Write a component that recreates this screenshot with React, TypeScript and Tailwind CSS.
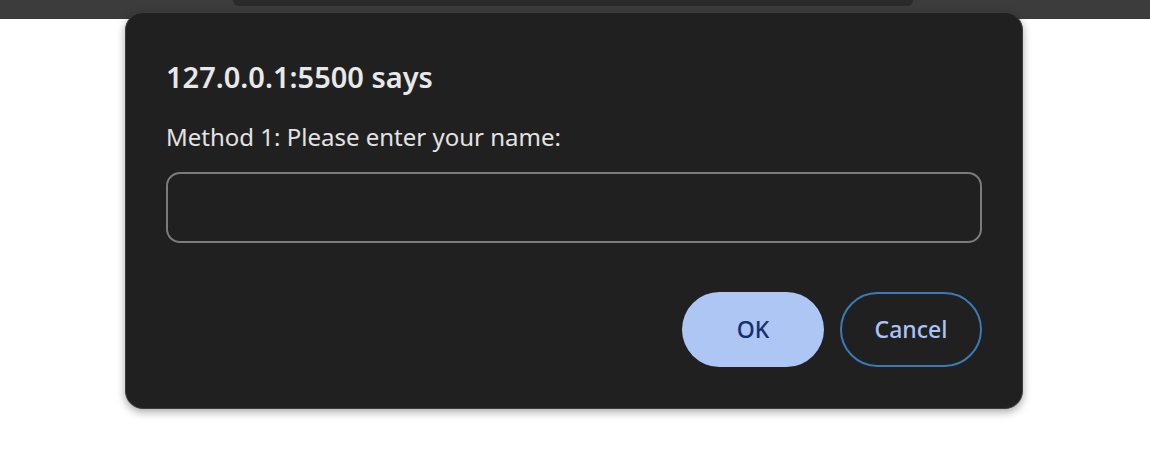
export default function App() {
  return (
    <div className="relative w-[1150px] h-[450px] bg-white overflow-hidden font-['Noto_Sans',sans-serif]">
      {/* browser chrome strip */}
      <div className="h-[19px] bg-[#3c3c3c] flex justify-center">
        <div className="ml-[-4px] w-[680px] h-[6px] bg-[#2a2a2a] rounded-b-[14px]"></div>
      </div>

      {/* prompt dialog */}
      <div className="absolute left-[125px] top-[12px] w-[898px] h-[397px] bg-[#202020] rounded-[18px] border border-[#3d3d3d] shadow-[0_3px_8px_rgba(0,0,0,0.35)] px-[40px] pt-[46px]">
        <h1 className="text-[29px] leading-[36px] font-semibold text-[#e8e8e8]">127.0.0.1:5500 says</h1>
        <p className="mt-[26px] text-[24px] leading-[32px] text-[#e3e3e3]">Method 1: Please enter your name:</p>
        <input
          className="mt-[19px] w-full h-[71px] rounded-[14px] border-2 border-[#7b7b7b] bg-transparent px-4 text-[21px] text-[#e3e3e3] outline-none"
          defaultValue=""
        />
        <div className="mt-[49px] flex justify-end gap-[16px]">
          <button className="w-[142px] h-[75px] rounded-full bg-[#aec6f4] text-[#15306e] text-[23px] font-medium">
            OK
          </button>
          <button className="w-[142px] h-[75px] rounded-full border-2 border-[#3b7ab8] text-[#a9c4f5] text-[23px] font-medium">
            Cancel
          </button>
        </div>
      </div>
    </div>
  );
}
